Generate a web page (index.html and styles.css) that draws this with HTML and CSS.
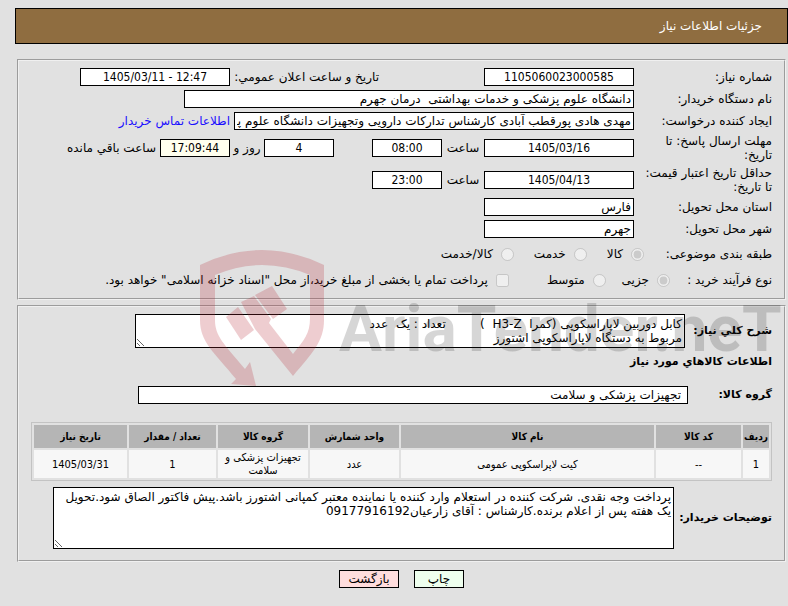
FILE: index.html
```html
<!DOCTYPE html>
<html lang="fa" dir="rtl">

<head>
  <meta charset="utf-8">
  <title>جزئیات اطلاعات نیاز</title>
  <link rel="stylesheet" href="styles.css">
</head>

<body>
  <header class="page-title">جزئیات اطلاعات نیاز</header>

  <form>
    <section class="panel need-info">
      <div class="row">
        <label class="label" for="needNo">شماره نیاز:</label>
        <input class="field center" id="needNo" value="1105060023000585" readonly>
        <label class="label-date" for="announceDate">تاریخ و ساعت اعلان عمومي:</label>
        <input class="field center" id="announceDate" value="1405/03/11 - 12:47" dir="ltr" readonly>
      </div>
      <div class="row">
        <label class="label" for="orgName">نام دستگاه خریدار:</label>
        <input class="field wide" id="orgName" value="دانشگاه علوم پزشکی و خدمات بهداشتی  درمان جهرم" readonly>
      </div>
      <div class="row">
        <label class="label" for="creator">ایجاد کننده درخواست:</label>
        <input class="field medium" id="creator" value="مهدی هادی پورقطب آبادی کارشناس تدارکات دارویی وتجهیزات دانشگاه علوم پزشکی جهرم" readonly>
        <a class="contact" href="#">اطلاعات تماس خریدار</a>
      </div>
      <div class="row">
        <label class="label" for="replyDate">مهلت ارسال پاسخ: تا<br>تاریخ:</label>
        <input class="field center" id="replyDate" value="1405/03/16" readonly>
        <label class="unit" for="replyTime">ساعت</label>
        <input class="field center short" id="replyTime" value="08:00" readonly>
        <input class="field center short days" id="daysLeft" value="4" readonly>
        <label class="unit-days" for="daysLeft">روز و</label>
        <input class="field center short remaining" id="timeLeft" value="17:09:44" readonly>
        <label class="after" for="timeLeft">ساعت باقي مانده</label>
      </div>
      <div class="row">
        <label class="label" for="priceDate">حداقل تاریخ اعتبار قیمت:<br>تا تاریخ:</label>
        <input class="field center" id="priceDate" value="1405/04/13" readonly>
        <label class="unit" for="priceTime">ساعت</label>
        <input class="field center short" id="priceTime" value="23:00" readonly>
      </div>
      <div class="row">
        <label class="label" for="province">استان محل تحویل:</label>
        <input class="field" id="province" value="فارس" readonly>
      </div>
      <div class="row">
        <label class="label" for="city">شهر محل تحویل:</label>
        <input class="field" id="city" value="جهرم" readonly>
      </div>
      <div class="row options subject">
        <span class="label-subject">طبقه بندی موضوعی:</span>
        <label class="option"><input type="radio" name="subject" checked disabled>کالا</label>
        <label class="option"><input type="radio" name="subject" disabled>خدمت</label>
        <label class="option"><input type="radio" name="subject" disabled>کالا/خدمت</label>
      </div>
      <div class="row options process">
        <span class="label-process">نوع فرآیند خرید :</span>
        <label class="option"><input type="radio" name="process" checked disabled>جزیی</label>
        <label class="option"><input type="radio" name="process" disabled>متوسط</label>
        <label class="option treasury"><input type="checkbox" disabled>پرداخت تمام یا بخشی از مبلغ خرید،از محل "اسناد خزانه اسلامی" خواهد بود.</label>
      </div>
    </section>

    <section class="panel need-items">
      <div class="row">
        <label class="label-bold label-desc" for="needDesc">شرح کلي نیاز:</label>
        <textarea class="field desc" id="needDesc" readonly>کابل دوربین لاپاراسکوپی (کمرا  H3-Z  )         تعداد : یک  عدد
مربوط به دستگاه لاپاراسکوپی اشتورز</textarea>
      </div>
      <h2>اطلاعات کالاهاي مورد نیاز</h2>
      <div class="row">
        <label class="label-bold label-group" for="itemGroup">گروه کالا:</label>
        <input class="field group" id="itemGroup" value="تجهیزات پزشکی و سلامت" readonly>
      </div>

      <table class="items">
        <thead>
          <tr>
            <th class="col-row">ردیف</th>
            <th class="col-code">کد کالا</th>
            <th>نام کالا</th>
            <th class="col-unit">واحد شمارش</th>
            <th class="col-group">گروه کالا</th>
            <th class="col-count">تعداد / مقدار</th>
            <th class="col-date">تاریخ نیاز</th>
          </tr>
        </thead>
        <tbody>
          <tr>
            <td>1</td>
            <td>--</td>
            <td>کیت لاپراسکوپی عمومی</td>
            <td>عدد</td>
            <td>تجهیزات پزشکی و سلامت</td>
            <td>1</td>
            <td>1405/03/31</td>
          </tr>
        </tbody>
      </table>

      <div class="row">
        <label class="label-bold label-notes" for="buyerNotes">توضیحات خریدار:</label>
        <textarea class="field notes" id="buyerNotes" readonly>پرداخت وجه نقدی. شرکت کننده در استعلام وارد کننده یا نماینده معتبر کمپانی اشتورز باشد.پیش فاکتور الصاق شود.تحویل یک هفته پس از اعلام برنده.کارشناس : آقای زارعیان09177916192</textarea>
      </div>
    </section>

    <div class="actions">
      <button class="btn btn-print" type="button">چاپ</button>
      <button class="btn btn-back" type="button">بازگشت</button>
    </div>
  </form>

  <!-- watermark over the form -->
  <svg class="watermark" viewBox="0 0 588 140" direction="ltr">
    <g class="mark">
      <path d="M0 15Q62 -15 124 15V70C124 92 112 103 93 126L55 79L41 52L54 46L71 69L69 73L93 104C104 90 110 84 110 68V25Q62 5 15 25V70C15 86 24 94 45 119L50 112L56 136L31 134L36 129C14 102 0 92 0 70Z" />
      <path d="M26 67L38 57L54 80L41 90Z" />
      <path d="M55 45L72 36L87 59L73 69Z" />
    </g>
    <text class="mark-text" x="139" y="101">AriaTender.neT</text>
  </svg>
</body>

</html>
```
FILE: styles.css
```css
body {
  position: relative;
  margin: 8px 0 0;
  padding-left: 15px;
  background-color: #e1e1e1;
  color: #000;
  font-family: "DejaVu Sans", sans-serif;
  font-size: 12px;
  line-height: 14px;
  overflow-x: hidden;
}

.page-title {
  padding: 10px 25px;
  border: 1px solid #000;
  background-color: #8f6d40;
  color: #fff;
}

.panel {
  margin: 15px 2px 0;
  padding: 7px 12px 8px;
  border: 2px groove #f0f0f0;
}

.need-items {
  margin-top: 5px;
  padding-bottom: 11px;
}

.row {
  display: flex;
  align-items: center;
  margin-bottom: 4px;
}

.row:last-child {
  margin-bottom: 0;
}

.label {
  flex: none;
  width: 138px;
}

.label-date {
  width: 149px;
  margin-right: 105px;
}

.field {
  box-sizing: border-box;
  width: 150px;
  height: 18px;
  padding: 0 2px;
  border: 1px solid #000;
  background-color: #fff;
  color: #000;
  font-family: inherit;
  font-size: 12px;
}

.center {
  text-align: center;
  font-family: "DejaVu Sans Condensed", "DejaVu Sans", sans-serif;
}

.short {
  width: 70px;
}

.medium {
  width: 400px;
}

.wide {
  width: 450px;
}

.days {
  margin-right: 38px;
}

.remaining {
  background-color: #ffffee;
}

.unit {
  width: 42px;
  text-align: center;
}

.unit-days {
  width: 34px;
  text-align: center;
}

.contact {
  margin-right: 4px;
  color: #1a0dff;
  text-decoration: none;
}

.after {
  margin-right: 4px;
}

.options {
  height: 24px;
}

.process {
  height: 20px;
}

.label-subject {
  width: 128px;
}

.label-process {
  width: 102px;
}

.option {
  display: flex;
  align-items: center;
  margin-left: 16px;
}

.subject .option {
  margin-left: 20px;
}

.option input {
  width: 13px;
  height: 13px;
  margin: 0 0 0 8px;
}

.treasury {
  margin-right: 22px;
}

.label-bold {
  flex: none;
  font-size: 11px;
  font-weight: bold;
}

.label-desc {
  width: 87px;
}

.label-group {
  width: 84px;
}

.label-notes {
  width: 98px;
}

textarea.field {
  padding: 2px;
  line-height: 14px;
  overflow: hidden;
}

.desc {
  width: 550px;
  height: 34px;
}

.notes {
  width: 621px;
  height: 62px;
}

.group {
  width: 550px;
  padding: 0 6px;
}

h2 {
  margin: 7px 0 17px;
  font-size: 11px;
}

.items {
  box-sizing: border-box;
  width: 741px;
  max-width: 100%;
  margin: 18px 0 6px;
  border: 1px solid #c3c3c3;
  border-spacing: 2px;
  table-layout: fixed;
  text-align: center;
  font-family: "DejaVu Sans Condensed", "DejaVu Sans", sans-serif;
  line-height: 13px;
}

.items th {
  height: 23px;
  padding: 0;
  background-color: #b5b5b5;
  font-size: 10px;
}

.items td {
  height: 28px;
  padding: 0;
  background-color: #f7f7f7;
  font-size: 11px;
}

.col-row {
  width: 26px;
}

.col-code {
  width: 85px;
}

.col-unit {
  width: 89px;
}

.col-group {
  width: 90px;
}

.col-count {
  width: 87px;
}

.col-date {
  width: 93px;
}

.actions {
  display: flex;
  justify-content: center;
  gap: 15px;
  margin-top: 8px;
}

.btn {
  height: 18px;
  padding: 0;
  border: 1px solid #000;
  color: #000;
  font-family: inherit;
  font-size: 12px;
  cursor: pointer;
}

.btn-print {
  width: 50px;
  background-color: #eeffee;
}

.btn-back {
  width: 60px;
  background-color: #ffdddd;
}

.watermark {
  position: absolute;
  top: 242px;
  left: 200px;
  width: 588px;
  height: 140px;
  pointer-events: none;
}

.mark {
  fill: rgba(181, 40, 50, 0.23);
}

.mark-text {
  fill: rgba(30, 30, 30, 0.18);
  font-family: Roboto, "Liberation Sans", sans-serif;
  font-size: 64px;
  font-weight: bold;
}
```
